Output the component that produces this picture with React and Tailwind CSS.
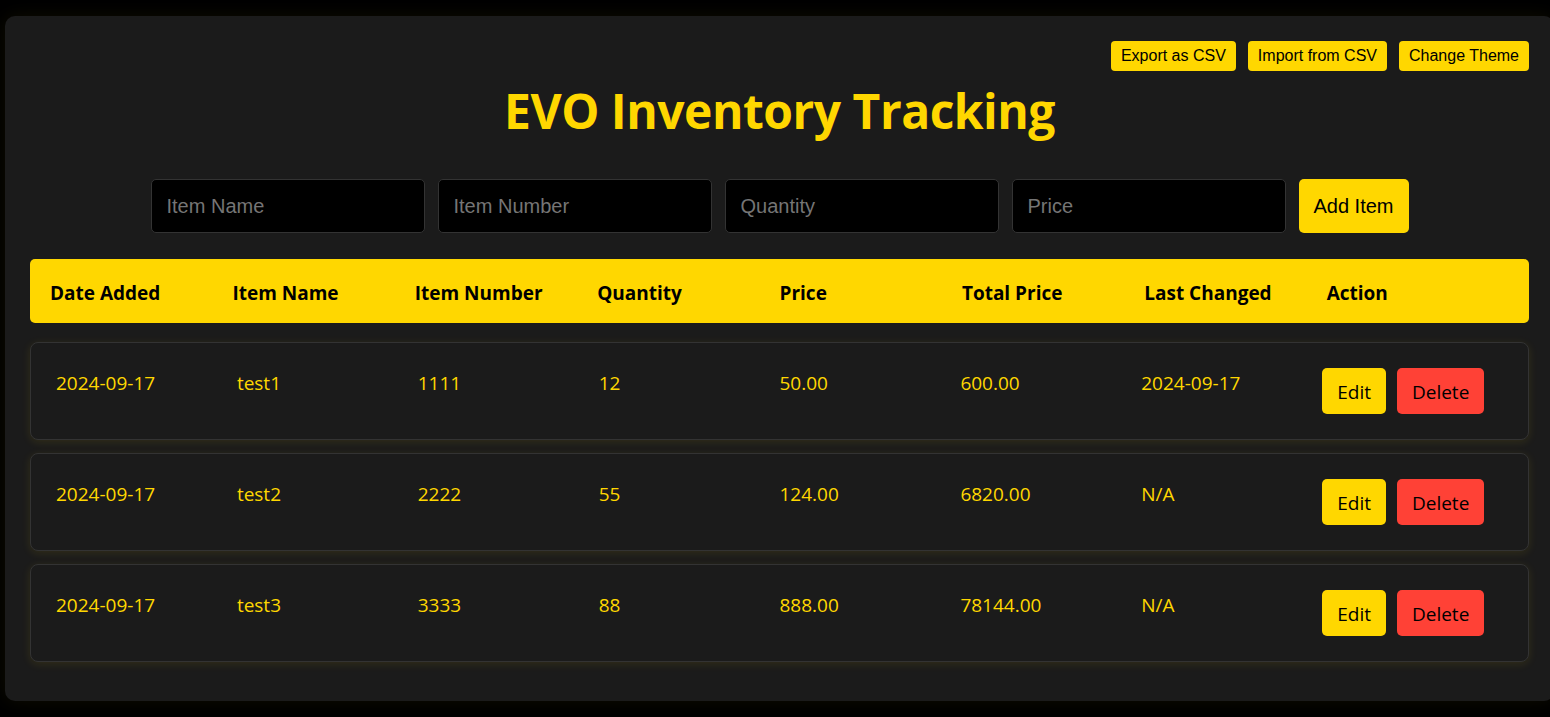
const items = [
    { date: "2024-09-17", name: "test1", number: "1111", qty: "12", price: "50.00", total: "600.00", changed: "2024-09-17" },
    { date: "2024-09-17", name: "test2", number: "2222", qty: "55", price: "124.00", total: "6820.00", changed: "N/A" },
    { date: "2024-09-17", name: "test3", number: "3333", qty: "88", price: "888.00", total: "78144.00", changed: "N/A" },
];

const headers = ["Date Added", "Item Name", "Item Number", "Quantity", "Price", "Total Price", "Last Changed", "Action"];
const fields = ["Item Name", "Item Number", "Quantity", "Price"];

const segoe = { fontFamily: '"Open Sans", "Noto Sans", sans-serif' };

export default function App() {
    return (
        <div className="min-h-[717px] w-full overflow-hidden bg-black pt-[16px]">
            {/* main panel */}
            <div className="ml-[5px] w-[1549px] h-[685px] rounded-[10px] bg-[#1b1b1b] px-[25px] pt-[25px] shadow-[0_0_18px_rgba(255,215,0,0.06)]">
                {/* top actions */}
                <div className="flex justify-end gap-3 font-['Liberation_Sans',Arial,sans-serif]">
                    <button type="button" className="h-[30px] rounded-[4px] bg-[#ffd700] px-[10px] text-[16px] text-black">
                        Export as CSV
                    </button>
                    <button type="button" className="h-[30px] rounded-[4px] bg-[#ffd700] px-[10px] text-[16px] text-black">
                        Import from CSV
                    </button>
                    <button type="button" className="h-[30px] rounded-[4px] bg-[#ffd700] px-[10px] text-[16px] text-black">
                        Change Theme
                    </button>
                </div>

                <h1 style={segoe} className="mt-[9px] text-center text-[48px] font-bold leading-[62px] text-[#ffd700] tracking-[-0.5px]">
                    EVO Inventory Tracking
                </h1>

                {/* add form */}
                <div className="mt-[37px] flex justify-center gap-[13px] font-['Liberation_Sans',Arial,sans-serif]">
                    {fields.map((f) => (
                        <input
                            key={f}
                            placeholder={f}
                            className="h-[54px] w-[274px] rounded-[5px] border border-[#333] bg-black px-[15px] text-[20px] text-white outline-none placeholder:text-[#757575]"
                        />
                    ))}
                    <button type="button" className="h-[54px] w-[110px] rounded-[5px] bg-[#ffd700] text-[20px] text-black">
                        Add Item
                    </button>
                </div>

                {/* table header */}
                <div style={segoe} className="mt-[26px] flex h-[64px] items-center rounded-[5px] bg-[#ffd700] px-5 pt-[5px]">
                    {headers.map((h) => (
                        <div key={h} className="flex-1 text-[19px] font-bold text-black">
                            {h}
                        </div>
                    ))}
                </div>

                {/* rows */}
                <div style={segoe} className="mt-[19px] flex flex-col gap-[13px]">
                    {items.map((it, i) => (
                        <div
                            key={i}
                            className="flex rounded-[8px] border border-[#333] bg-[#1b1b1b] p-[25px] shadow-[0_2px_10px_rgba(255,215,0,0.1)]"
                        >
                            {[it.date, it.name, it.number, it.qty, it.price, it.total, it.changed].map((v, j) => (
                                <div key={j} className="flex-1 text-[19px] leading-[30px] text-[#ffd700]">
                                    {v}
                                </div>
                            ))}
                            <div className="flex flex-1 gap-[11px]">
                                <button type="button" className="h-[46px] w-[64px] rounded-[5px] bg-[#ffd700] pt-[3px] text-[19px] text-black">
                                    Edit
                                </button>
                                <button type="button" className="h-[46px] w-[87px] rounded-[5px] bg-[#ff4136] pt-[3px] text-[19px] text-black">
                                    Delete
                                </button>
                            </div>
                        </div>
                    ))}
                </div>
            </div>
        </div>
    );
}
